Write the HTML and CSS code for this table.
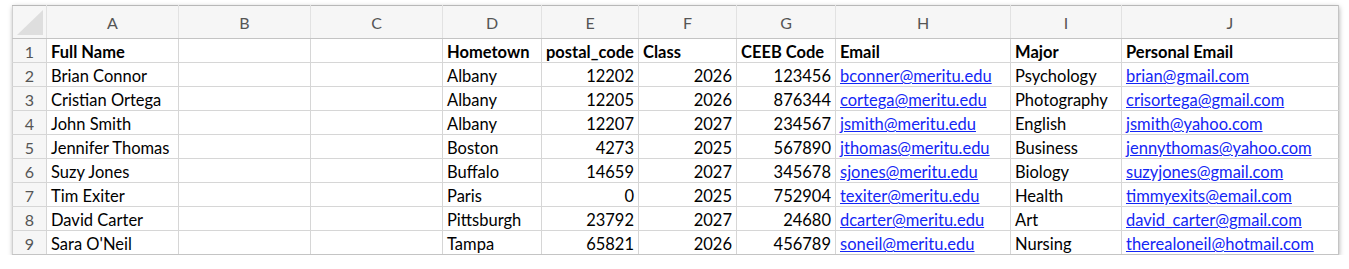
FILE: index.html
```html
<!DOCTYPE html>
<html>
<head>
<meta charset="utf-8">
<link rel="stylesheet" href="styles.css">
</head>
<body>
<div class="sheet">
<table class="grid">
<colgroup>
<col class="c-num"><col class="c-a"><col class="c-b"><col class="c-c"><col class="c-d"><col class="c-e"><col class="c-f"><col class="c-g"><col class="c-h"><col class="c-i"><col class="c-j">
</colgroup>
<thead>
<tr class="letters">
<th class="corner"><span class="tri"></span></th><th>A</th><th>B</th><th>C</th><th>D</th><th>E</th><th>F</th><th>G</th><th>H</th><th>I</th><th>J</th>
</tr>
</thead>
<tbody>
<tr class="head"><td class="rn">1</td><td>Full Name</td><td></td><td></td><td>Hometown</td><td>postal_code</td><td>Class</td><td>CEEB Code</td><td>Email</td><td>Major</td><td>Personal Email</td></tr>
<tr><td class="rn">2</td><td>Brian Connor</td><td></td><td></td><td>Albany</td><td class="num">12202</td><td class="num">2026</td><td class="num">123456</td><td><a>bconner@meritu.edu</a></td><td>Psychology</td><td><a>brian@gmail.com</a></td></tr>
<tr><td class="rn">3</td><td>Cristian Ortega</td><td></td><td></td><td>Albany</td><td class="num">12205</td><td class="num">2026</td><td class="num">876344</td><td><a>cortega@meritu.edu</a></td><td>Photography</td><td><a>crisortega@gmail.com</a></td></tr>
<tr><td class="rn">4</td><td>John Smith</td><td></td><td></td><td>Albany</td><td class="num">12207</td><td class="num">2027</td><td class="num">234567</td><td><a>jsmith@meritu.edu</a></td><td>English</td><td><a>jsmith@yahoo.com</a></td></tr>
<tr><td class="rn">5</td><td>Jennifer Thomas</td><td></td><td></td><td>Boston</td><td class="num">4273</td><td class="num">2025</td><td class="num">567890</td><td><a>jthomas@meritu.edu</a></td><td>Business</td><td><a>jennythomas@yahoo.com</a></td></tr>
<tr><td class="rn">6</td><td>Suzy Jones</td><td></td><td></td><td>Buffalo</td><td class="num">14659</td><td class="num">2027</td><td class="num">345678</td><td><a>sjones@meritu.edu</a></td><td>Biology</td><td><a>suzyjones@gmail.com</a></td></tr>
<tr><td class="rn">7</td><td>Tim Exiter</td><td></td><td></td><td>Paris</td><td class="num">0</td><td class="num">2025</td><td class="num">752904</td><td><a>texiter@meritu.edu</a></td><td>Health</td><td><a>timmyexits@email.com</a></td></tr>
<tr><td class="rn">8</td><td>David Carter</td><td></td><td></td><td>Pittsburgh</td><td class="num">23792</td><td class="num">2027</td><td class="num">24680</td><td><a>dcarter@meritu.edu</a></td><td>Art</td><td><a>david_carter@gmail.com</a></td></tr>
<tr><td class="rn">9</td><td>Sara O'Neil</td><td></td><td></td><td>Tampa</td><td class="num">65821</td><td class="num">2026</td><td class="num">456789</td><td><a>soneil@meritu.edu</a></td><td>Nursing</td><td><a>therealoneil@hotmail.com</a></td></tr>
</tbody>
</table>
</div>
</body>
</html>
```
FILE: styles.css
```css
html, body {
  margin: 0;
  padding: 0;
  background: #ffffff;
}
body {
  padding: 5px 0 0 12px;
  font-family: Lato, "Open Sans", sans-serif;
}
.sheet {
  width: 1326px;
  box-shadow: 1px 2px 5px rgba(0, 0, 0, 0.35);
}
.grid {
  border-collapse: collapse;
  table-layout: fixed;
  width: 1326px;
  font-size: 16.5px;
  color: #000;
}
.c-num { width: 34px; }
.c-a, .c-b, .c-c { width: 132px; }
.c-d { width: 99px; }
.c-e { width: 97px; }
.c-f { width: 98px; }
.c-g { width: 99px; }
.c-h { width: 175px; }
.c-i { width: 111px; }
.c-j { width: 217px; }
.letters th {
  height: 32px;
  padding: 0;
  background: #f6f6f6;
  color: #555;
  font-weight: normal;
  font-size: 16px;
  text-align: center;
  vertical-align: middle;
  border-top: 1px solid #b8b8b8;
  border-bottom: 1px solid #c4c4c4;
  border-left: 1px solid #e2e2e2;
  border-right: 1px solid #e2e2e2;
}
.letters th:first-child { border-left-color: #d0d0d0; }
.letters th:last-child { border-right-color: #c4c4c4; }
.corner {
  position: relative;
}
.tri {
  position: absolute;
  left: 4px;
  top: 4px;
  width: 26px;
  height: 25px;
  background: #dedede;
  clip-path: polygon(100% 0, 100% 100%, 0 100%);
}
tbody tr {
  height: 24px;
}
tbody td {
  padding: 0 4px 0 4px;
  border: 1px solid #d6d6d6;
  white-space: nowrap;
  overflow: hidden;
  vertical-align: bottom;
  line-height: 20px;
}
tbody td.rn {
  background: #f6f6f6;
  color: #555;
  text-align: center;
  padding: 0;
  font-size: 16px;
  border-left-color: #d0d0d0;
}
tbody td:last-child { border-right-color: #c4c4c4; }
tbody tr:last-child td { border-bottom-color: #c4c4c4; }
.head td { font-weight: bold; }
.head td.rn { font-weight: normal; }
td.num { text-align: right; }
td a {
  color: #1326f5;
  text-decoration: underline;
}
```
